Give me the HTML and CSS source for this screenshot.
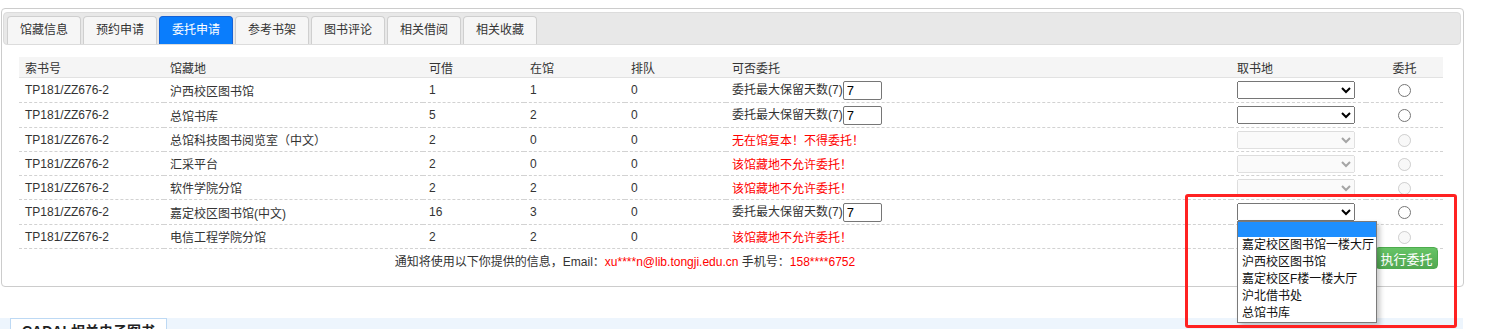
FILE: index.html
```html
<!DOCTYPE html>
<html lang="zh-CN">
<head>
<meta charset="utf-8">
<title>委托申请</title>
<link rel="stylesheet" href="styles.css">
</head>
<body>
<div class="page">
  <div class="panel">
    <ul class="tabs">
      <li class="tab">馆藏信息</li>
      <li class="tab">预约申请</li>
      <li class="tab active">委托申请</li>
      <li class="tab">参考书架</li>
      <li class="tab">图书评论</li>
      <li class="tab">相关借阅</li>
      <li class="tab">相关收藏</li>
    </ul>
    <table class="holdings">
      <colgroup>
        <col class="c-call"><col class="c-loc"><col class="c-num"><col class="c-num"><col class="c-num"><col class="c-status"><col class="c-pick"><col class="c-radio">
      </colgroup>
      <thead>
        <tr><th>索书号</th><th>馆藏地</th><th>可借</th><th>在馆</th><th>排队</th><th>可否委托</th><th>取书地</th><th class="center">委托</th></tr>
      </thead>
      <tbody>
        <tr class="tall">
          <td>TP181/ZZ676-2</td><td>沪西校区图书馆</td><td>1</td><td>1</td><td>0</td>
          <td>委托最大保留天数(7)<input class="days" type="text" value="7"></td>
          <td><select class="pick"><option></option></select></td>
          <td class="center"><input class="radio" type="radio" name="r"></td>
        </tr>
        <tr class="tall">
          <td>TP181/ZZ676-2</td><td>总馆书库</td><td>5</td><td>2</td><td>0</td>
          <td>委托最大保留天数(7)<input class="days" type="text" value="7"></td>
          <td><select class="pick"><option></option></select></td>
          <td class="center"><input class="radio" type="radio" name="r"></td>
        </tr>
        <tr>
          <td>TP181/ZZ676-2</td><td>总馆科技图书阅览室（中文）</td><td>2</td><td>0</td><td>0</td>
          <td class="red">无在馆复本！不得委托！</td>
          <td><select class="pick" disabled><option></option></select></td>
          <td class="center"><input class="radio" type="radio" name="r" disabled></td>
        </tr>
        <tr>
          <td>TP181/ZZ676-2</td><td>汇采平台</td><td>2</td><td>0</td><td>0</td>
          <td class="red">该馆藏地不允许委托！</td>
          <td><select class="pick" disabled><option></option></select></td>
          <td class="center"><input class="radio" type="radio" name="r" disabled></td>
        </tr>
        <tr>
          <td>TP181/ZZ676-2</td><td>软件学院分馆</td><td>2</td><td>2</td><td>0</td>
          <td class="red">该馆藏地不允许委托！</td>
          <td><select class="pick" disabled><option></option></select></td>
          <td class="center"><input class="radio" type="radio" name="r" disabled></td>
        </tr>
        <tr class="tall">
          <td>TP181/ZZ676-2</td><td>嘉定校区图书馆(中文)</td><td>16</td><td>3</td><td>0</td>
          <td>委托最大保留天数(7)<input class="days" type="text" value="7"></td>
          <td><select class="pick open"><option></option></select></td>
          <td class="center"><input class="radio" type="radio" name="r"></td>
        </tr>
        <tr>
          <td>TP181/ZZ676-2</td><td>电信工程学院分馆</td><td>2</td><td>2</td><td>0</td>
          <td class="red">该馆藏地不允许委托！</td>
          <td><select class="pick" disabled><option></option></select></td>
          <td class="center"><input class="radio" type="radio" name="r" disabled></td>
        </tr>
      </tbody>
    </table>
    <div class="footer">
      <p class="notice">通知将使用以下你提供的信息，Email：<span class="red">xu****n@lib.tongji.edu.cn</span> 手机号：<span class="red">158****6752</span></p>
      <button class="btn-exec" type="button">执行委托</button>
    </div>
  </div>
  <div class="cadal">
    <div class="cadal-tab">CADAL相关电子图书</div>
  </div>
  <ul class="dropdown">
    <li class="sel"></li>
    <li>嘉定校区图书馆一楼大厅</li>
    <li>沪西校区图书馆</li>
    <li>嘉定校区F楼一楼大厅</li>
    <li>沪北借书处</li>
    <li>总馆书库</li>
  </ul>
  <div class="highlight"></div>
</div>
</body>
</html>
```

FILE: styles.css
```css
html, body {
  margin: 0;
  padding: 0;
  background: #fff;
  overflow: hidden;
}

body {
  font-family: "Liberation Sans", "Noto Sans CJK SC", sans-serif;
  font-size: 12px;
  color: #333;
}

.page {
  position: relative;
  height: 329px;
  overflow: hidden;
}

.panel {
  margin: 8px 0 0 1px;
  width: 1463px;
  box-sizing: border-box;
  border: 1px solid #cccccc;
  border-radius: 4px;
  padding: 3px 2px 14px 1px;
}

.tabs {
  display: flex;
  gap: 2px;
  list-style: none;
  margin: 0;
  padding: 3px 0 0 3px;
  height: 33px;
  box-sizing: border-box;
  background: #e8e8e8;
  border: 1px solid #dcdcdc;
  border-radius: 4px;
}

.tab {
  width: 74px;
  height: 28px;
  box-sizing: border-box;
  border: 1px solid #cfcfcf;
  border-bottom: none;
  border-radius: 4px 4px 0 0;
  background: #f6f6f6;
  text-align: center;
  line-height: 27px;
  color: #333;
}

.tab.active {
  background: #0a7dfc;
  border: 1px solid #1562d6;
  border-bottom: none;
  color: #fff;
}

.holdings {
  margin: 12px 0 0 16px;
  width: 1424px;
  table-layout: fixed;
  border-collapse: separate;
  border-spacing: 0;
}

.c-call { width: 145px; }
.c-loc { width: 259px; }
.c-num { width: 101px; }
.c-status { width: 505px; }
.c-pick { width: 135px; }
.c-radio { width: 77px; }

.holdings th {
  font-weight: normal;
  text-align: left;
  padding: 0 0 0 6px;
  background: #f5f5f5;
  border-bottom: 1px solid #e2e2e2;
  height: 20px;
  white-space: nowrap;
}

.holdings td {
  padding: 0 0 0 6px;
  border-bottom: 1px dashed #d2d2d2;
  height: 23px;
  white-space: nowrap;
}

.holdings tr.tall td {
  height: 24px;
}

.holdings .center {
  text-align: center;
  padding: 0;
}

.red {
  color: #ff0000;
}

.days {
  width: 39px;
  height: 19px;
  box-sizing: border-box;
  margin: 0;
  padding: 0 0 0 3px;
  border: 1px solid #767676;
  border-radius: 2px;
  font: 13px "Liberation Sans", sans-serif;
  color: #000;
  vertical-align: middle;
}

.pick {
  width: 118px;
  height: 18px;
  margin: 0;
  font-size: 12px;
  vertical-align: middle;
}

.radio {
  margin: 0;
  vertical-align: middle;
}

.footer {
  display: flex;
  align-items: flex-start;
  margin: -2px 0 0 16px;
  width: 1424px;
}

.notice {
  width: 1212px;
  margin: 0;
  padding-top: 5px;
  line-height: 20px;
  text-align: center;
}

.btn-exec {
  margin: 0 5px 0 auto;
  width: 63px;
  height: 22px;
  padding: 0;
  border: 1px solid #4dab4d;
  border-radius: 4px;
  background: linear-gradient(#66c466, #52a852);
  color: #fff;
  font-family: "Liberation Sans", "Noto Sans CJK SC", sans-serif;
  font-size: 13px;
}

.cadal {
  margin-top: 31px;
  width: 1463px;
  height: 40px;
  background: #edf5fd;
  padding-left: 10px;
  box-sizing: border-box;
}

.cadal-tab {
  display: inline-block;
  height: 40px;
  box-sizing: border-box;
  padding: 0 11px;
  border: 1px solid #bdd9f4;
  border-bottom: none;
  background: #fff;
  font-size: 14px;
  font-weight: bold;
  line-height: 24px;
  color: #222;
}

.dropdown {
  position: absolute;
  left: 1237px;
  top: 221px;
  width: 140px;
  box-sizing: border-box;
  margin: 0;
  padding: 0;
  list-style: none;
  background: #fff;
  border: 1px solid #7a7a7a;
  box-shadow: 3px 3px 5px rgba(0, 0, 0, 0.22);
}

.dropdown li {
  height: 17px;
  line-height: 17px;
  padding-left: 4px;
  color: #111;
  white-space: nowrap;
}

.dropdown li.sel {
  height: 15px;
  background: #1e8fff;
}

.highlight {
  position: absolute;
  left: 1185px;
  top: 194px;
  width: 272px;
  height: 134px;
  box-sizing: border-box;
  border: 3px solid #ff2222;
  border-radius: 3px;
}
```
